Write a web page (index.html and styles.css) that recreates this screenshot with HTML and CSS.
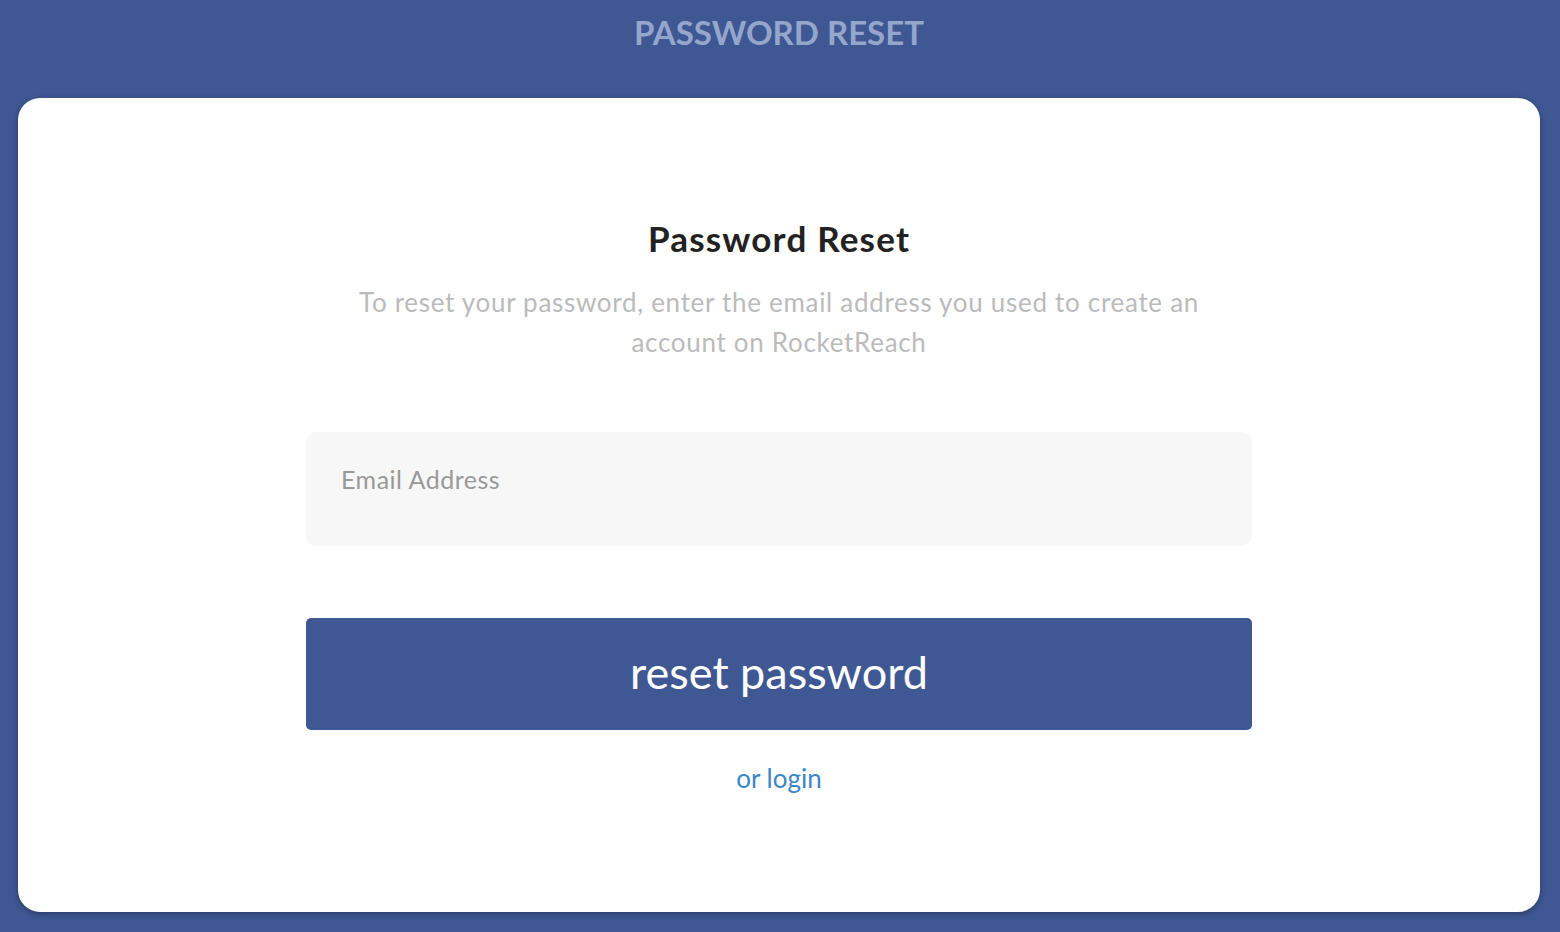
FILE: index.html
```html
<!DOCTYPE html>
<html lang="en">

<head>
    <meta charset="UTF-8">
    <title>Password Reset</title>
    <link rel="stylesheet" href="styles.css">
</head>

<body>
    <header class="page-header">
        <h1 class="page-title">PASSWORD RESET</h1>
    </header>

    <main class="card">
        <div class="reset-form">
            <h2 class="form-title">Password Reset</h2>
            <p class="form-text">To reset your password, enter the email address you used to create an account on RocketReach</p>

            <input class="email-input" type="email" placeholder="Email Address">

            <button class="reset-button" type="button">reset password</button>

            <a class="login-link" href="#">or login</a>
        </div>
    </main>
</body>

</html>
```

FILE: styles.css
```css
body {
    margin: 0;
    background: #3f5894;
    font-family: Lato, "Noto Sans", sans-serif;
    height: 100vh;
    display: flex;
    flex-direction: column;
    padding: 0 20px 20px 18px;
    box-sizing: border-box;
}

.page-header {
    height: 98px;
    display: flex;
    justify-content: center;
}

.page-title {
    margin: 12px 0 0;
    font-size: 33px;
    font-weight: 700;
    color: #95a6cc;
    line-height: 40px;
}

.card {
    flex: 1;
    background: #fff;
    border-radius: 22px;
    box-shadow: 0 2px 6px rgba(0, 0, 0, 0.35);
    display: flex;
    justify-content: center;
}

.reset-form {
    width: 946px;
    display: flex;
    flex-direction: column;
    align-items: center;
    padding-top: 116px;
}

.form-title {
    margin: 0;
    font-size: 35px;
    font-weight: 700;
    letter-spacing: 1.2px;
    color: #222;
    line-height: 48px;
}

.form-text {
    margin: 20px 0 0;
    font-size: 26px;
    letter-spacing: 0.7px;
    line-height: 40px;
    color: #bbb;
    text-align: center;
    max-width: 880px;
}

/* campo de email */
.email-input {
    margin-top: 70px;
    width: 100%;
    height: 114px;
    box-sizing: border-box;
    border: none;
    border-radius: 10px;
    background: #f7f7f7;
    padding: 0 35px 20px;
    font-family: inherit;
    font-size: 25px;
    letter-spacing: 0.5px;
    color: #333;
    outline: none;
}

.email-input::placeholder {
    color: #999;
}

.reset-button {
    margin-top: 72px;
    width: 100%;
    height: 112px;
    border: none;
    border-radius: 5px;
    background: #3f5894;
    color: #fff;
    font-family: inherit;
    font-size: 45px;
    padding-bottom: 6px;
    cursor: pointer;
}

.login-link {
    margin-top: 32px;
    font-size: 26px;
    color: #3a87c8;
    text-decoration: none;
}
```
